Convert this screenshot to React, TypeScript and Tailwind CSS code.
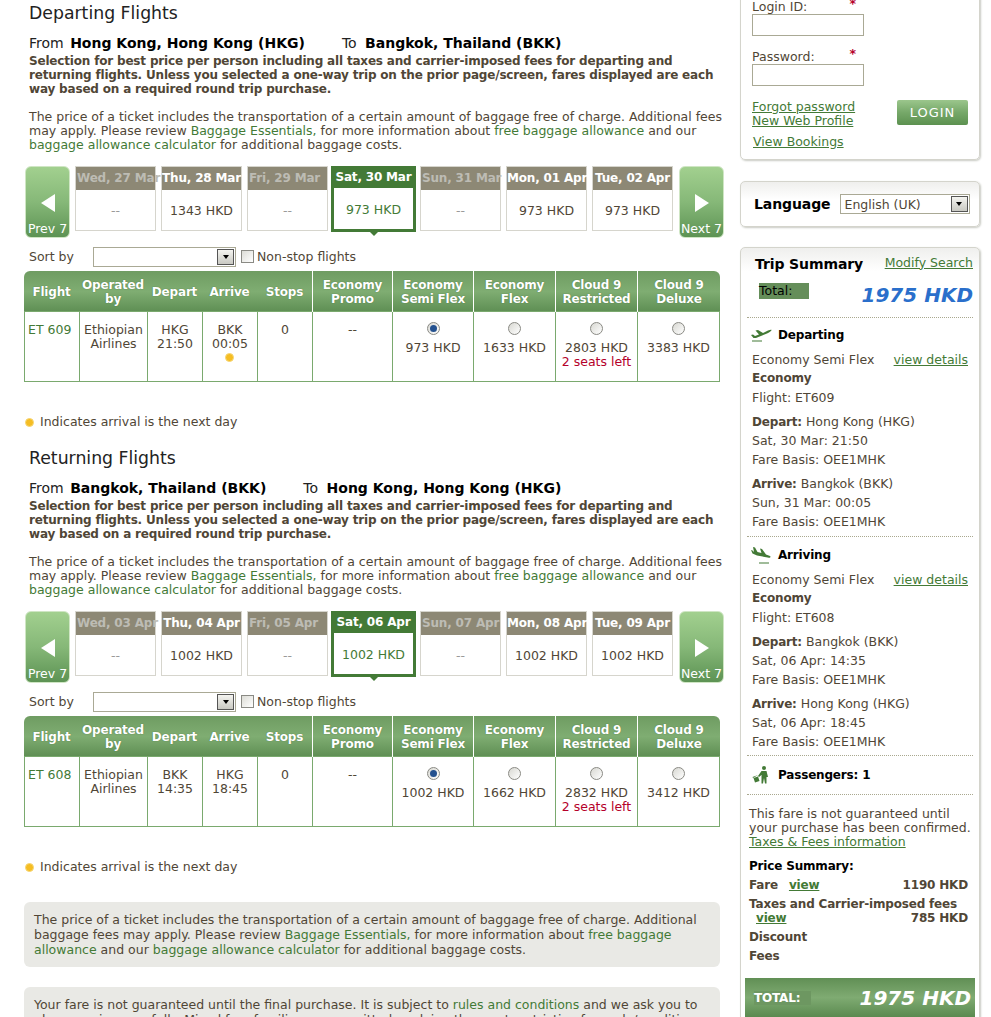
import React from 'react';

const link = 'text-[#437a36]';
const bold = 'font-bold text-[12px] tracking-[-0.18px]';

interface DayCell { label: string; price: string; off?: boolean; selected?: boolean }
interface FlightData {
  title: string;
  from: string;
  to: string;
  days: DayCell[];
  flight: string;
  depCode: string;
  depTime: string;
  arrCode: string;
  arrTime: string;
  nextDay: boolean;
  fares: string[];
}

const sections: FlightData[] = [
  {
    title: 'Departing Flights',
    from: 'Hong Kong, Hong Kong (HKG)',
    to: 'Bangkok, Thailand (BKK)',
    days: [
      { label: 'Wed, 27 Mar', price: '--', off: true },
      { label: 'Thu, 28 Mar', price: '1343 HKD' },
      { label: 'Fri, 29 Mar', price: '--', off: true },
      { label: 'Sat, 30 Mar', price: '973 HKD', selected: true },
      { label: 'Sun, 31 Mar', price: '--', off: true },
      { label: 'Mon, 01 Apr', price: '973 HKD' },
      { label: 'Tue, 02 Apr', price: '973 HKD' },
    ],
    flight: 'ET 609',
    depCode: 'HKG',
    depTime: '21:50',
    arrCode: 'BKK',
    arrTime: '00:05',
    nextDay: true,
    fares: ['973 HKD', '1633 HKD', '2803 HKD', '3383 HKD'],
  },
  {
    title: 'Returning Flights',
    from: 'Bangkok, Thailand (BKK)',
    to: 'Hong Kong, Hong Kong (HKG)',
    days: [
      { label: 'Wed, 03 Apr', price: '--', off: true },
      { label: 'Thu, 04 Apr', price: '1002 HKD' },
      { label: 'Fri, 05 Apr', price: '--', off: true },
      { label: 'Sat, 06 Apr', price: '1002 HKD', selected: true },
      { label: 'Sun, 07 Apr', price: '--', off: true },
      { label: 'Mon, 08 Apr', price: '1002 HKD' },
      { label: 'Tue, 09 Apr', price: '1002 HKD' },
    ],
    flight: 'ET 608',
    depCode: 'BKK',
    depTime: '14:35',
    arrCode: 'HKG',
    arrTime: '18:45',
    nextDay: false,
    fares: ['1002 HKD', '1662 HKD', '2832 HKD', '3412 HKD'],
  },
];

const Dot = () => (
  <span className="inline-block w-[9px] h-[9px] rounded-full bg-[#f5bd23] border border-[#f7d675]" />
);

const SelectArrow = () => (
  <span className="absolute right-[1px] top-[1px] bottom-[1px] w-[17px] flex items-center justify-center bg-gradient-to-b from-[#f4f4f0] to-[#c9c9c2] border border-[#555]">
    <span className="w-0 h-0 border-x-[3.5px] border-x-transparent border-t-[4px] border-t-black" />
  </span>
);

const PlaneUp = () => (
  <svg width="21" height="14" viewBox="0 0 21 14" className="text-[#437a36]">
    <path d="M0 7 L2 6.5 L4 8 L8 6.5 L4.5 2.5 L7 2 L12 5 L17 2.5 C19 1.6 20.5 1.4 20.6 2 C20.6 3 18 4.5 16 5.5 L5 10 L2.5 10 Z" fill="currentColor" />
    <rect x="1" y="12.5" width="10" height="1" fill="currentColor" />
  </svg>
);

const PlaneDown = () => (
  <svg width="20" height="17" viewBox="0 0 20 17" className="text-[#437a36]">
    <path d="M2 0 L4 .5 L6.5 5 L10.5 6 L9 1.5 L11 2 L15 7.5 L19 9 C20 9.6 19.5 11 18 10.8 L6 8.5 L1.5 6.5 L0 3 L1.5 3.5 L3 5 Z" fill="currentColor" />
    <rect x="8" y="15.5" width="10" height="1" fill="currentColor" />
  </svg>
);

const Traveller = () => (
  <svg width="17" height="18" viewBox="0 0 17 18" className="text-[#437a36]">
    <circle cx="12" cy="2" r="2" fill="currentColor" />
    <path d="M9.5 5 H14.5 L16 11 H14.5 L14.5 17.5 H13 L12 12 L11 17.5 H9.5 L9.5 9 L7 11 L6 10 Z" fill="currentColor" />
    <path d="M1.5 12 L6 10.5 L7.5 15 L3 16.5 Z M6 9 L1 12 L.5 11 Z" fill="currentColor" />
  </svg>
);

const NavButton = ({ dir }: { dir: 'prev' | 'next' }) => (
  <div className="relative w-[45px] h-[72px] rounded-[6px] border border-[#cfe6c4] bg-gradient-to-b from-[#a2d08f] via-[#86b878] to-[#5d9354] flex flex-col items-center shrink-0">
    <span
      className={
        dir === 'prev'
          ? 'mt-[27px] w-0 h-0 border-y-[9px] border-y-transparent border-r-[14px] border-r-white'
          : 'mt-[27px] w-0 h-0 border-y-[9px] border-y-transparent border-l-[14px] border-l-white'
      }
    />
    <span className="absolute bottom-[1px] left-0 right-0 text-center text-white text-[12.5px] leading-[14px] whitespace-nowrap">
      {dir === 'prev' ? 'Prev 7' : 'Next 7'}
    </span>
  </div>
);

const DayCard = ({ day }: { day: DayCell }) => {
  if (day.selected) {
    return (
      <div className="relative w-[85px] h-[66px] border-[3px] border-t-0 border-[#437a36] shrink-0 -ml-[2px] -mr-[1px] bg-white">
        <div className={`h-[22px] bg-[#437a36] text-white ${bold} leading-[22px] text-center whitespace-nowrap`}>
          {day.label}
        </div>
        <div className="text-center text-[#437a36] leading-[14px] mt-[15px]">{day.price}</div>
        <span className="absolute left-1/2 -translate-x-1/2 -bottom-[7px] w-0 h-0 border-x-[7px] border-x-transparent border-t-[7px] border-t-[#437a36]" />
      </div>
    );
  }
  return (
    <div className="w-[81px] h-[65px] border border-[#d6d5cd] shrink-0">
      <div
        className={
          day.off
            ? `h-[23px] bg-[#8d8875] text-[#bdbcb4] ${bold} leading-[23px] pl-[1px] whitespace-nowrap`
            : `h-[23px] bg-[#8d8875] text-white ${bold} leading-[23px] text-center whitespace-nowrap`
        }
      >
        {day.label}
      </div>
      <div className={day.off ? 'text-center text-[#9a9a9a] leading-[14px] mt-[14px]' : 'text-center leading-[14px] mt-[14px]'}>
        {day.price}
      </div>
    </div>
  );
};

const Radio = ({ checked }: { checked?: boolean }) => (
  <span className="inline-flex items-center justify-center w-[13px] h-[13px] rounded-full border border-[#8a8a84] bg-gradient-to-br from-[#d8d8d2] to-white">
    {checked && <span className="w-[7px] h-[7px] rounded-full bg-[#24518f]" />}
  </span>
);

const headCols = [
  { label: ['Flight'], w: 'w-[55px]' },
  { label: ['Operated', 'by'], w: 'w-[68px]' },
  { label: ['Depart'], w: 'w-[55px]' },
  { label: ['Arrive'], w: 'w-[55px]' },
  { label: ['Stops'], w: 'w-[55px]' },
  { label: ['Economy', 'Promo'], w: 'w-[80px]', line: true },
  { label: ['Economy', 'Semi Flex'], w: 'w-[81px]', line: true },
  { label: ['Economy', 'Flex'], w: 'w-[82px]', line: true },
  { label: ['Cloud 9', 'Restricted'], w: 'w-[82px]', line: true },
  { label: ['Cloud 9', 'Deluxe'], w: 'w-[83px]', line: true },
];

const FlightSection = ({ s }: { s: FlightData }) => (
  <section>
    <h2 className="pl-[5px] text-[17.3px] leading-[26px] text-[#222] h-[26px]">{s.title}</h2>
    <p className="pl-[5px] mt-[8px] text-[14px] leading-[18px] text-[#222] whitespace-nowrap">
      From <b className="text-black ml-[2px]">{s.from}</b>
      <span className="ml-[37px]">To </span>
      <b className="text-black ml-[4px]">{s.to}</b>
    </p>
    <p className={`pl-[5px] w-[700px] mt-[2px] ${bold} leading-[14px]`}>
      Selection for best price per person including all taxes and carrier-imposed fees for departing and returning flights. Unless you selected a one-way trip on the prior page/screen, fares displayed are each way based on a required round trip purchase.
    </p>
    <p className="pl-[5px] w-[704px] mt-[14px] leading-[14px]">
      The price of a ticket includes the transportation of a certain amount of baggage free of charge. Additional fees may apply. Please review <span className={link}>Baggage Essentials,</span> for more information about <span className={link}>free baggage allowance</span> and our <span className={link}>baggage allowance calculator</span> for additional baggage costs.
    </p>

    <div className="flex gap-[5px] mt-[14px] ml-[1px] h-[73px] w-[700px]">
      <NavButton dir="prev" />
      {s.days.map(d => <DayCard key={d.label} day={d} />)}
      <div className="ml-[1px]"><NavButton dir="next" /></div>
    </div>

    <div className="flex items-center h-[20px] mt-[8px] pl-[5px]">
      <span className="w-[64px]">Sort by</span>
      <span className="relative inline-block w-[143px] h-[20px] border border-[#aaa995] bg-white"><SelectArrow /></span>
      <span className="ml-[5px] w-[13px] h-[13px] border border-[#8a8a84] bg-gradient-to-br from-[#dcdcd6] to-white -mt-[2px]" />
      <span className="ml-[3px]">Non-stop flights</span>
    </div>

    <div className="mt-[4px] w-[696px]">
      <div className="flex h-[41px] rounded-t-[6px] overflow-hidden bg-gradient-to-b from-[#6f9c62] via-[#7fad72] to-[#5e8e53]">
        {headCols.map(c => (
          <div
            key={c.label.join(' ')}
            className={`${c.w} ${c.line ? 'border-l border-white' : ''} flex flex-col items-center justify-center text-white ${bold} leading-[14px] [text-shadow:0_0_1px_#3f6b36]`}
          >
            {c.label.map(l => <span key={l}>{l}</span>)}
          </div>
        ))}
      </div>
      <div className="flex h-[71px] border-x border-b border-[#7aa96e] border-t leading-[14px] text-center -mt-[1px]">
        <div className="w-[55px] pt-[11px] pl-[3px] text-left text-[#437a36] border-r border-[#7aa96e] shrink-0">{s.flight}</div>
        <div className="w-[68px] pt-[11px] border-r border-[#7aa96e] shrink-0">Ethiopian<br />Airlines</div>
        <div className="w-[55px] pt-[11px] border-r border-[#7aa96e] shrink-0">{s.depCode}<br />{s.depTime}</div>
        <div className="w-[55px] pt-[11px] border-r border-[#7aa96e] shrink-0">
          {s.arrCode}<br />{s.arrTime}
          {s.nextDay && <div className="flex justify-center -ml-[2px] mt-[2px]"><Dot /></div>}
        </div>
        <div className="w-[55px] pt-[11px] border-r border-[#7aa96e] shrink-0">0</div>
        <div className="w-[80px] pt-[11px] border-r border-[#7aa96e] shrink-0">--</div>
        {s.fares.map((f, i) => (
          <div key={f} className={i === 3 ? 'w-[81px] pt-[10px] shrink-0' : i === 0 ? 'w-[81px] pt-[10px] border-r border-[#7aa96e] shrink-0' : 'w-[82px] pt-[10px] border-r border-[#7aa96e] shrink-0'}>
            <div className="h-[15px] flex justify-center"><Radio checked={i === 0} /></div>
            <div className="mt-[4px]">{f}</div>
            {i === 2 && <div className="text-[#b5002a]">2 seats left</div>}
          </div>
        ))}
      </div>
    </div>

    <div className="flex items-center h-[14px] mt-[33px] ml-[1px] gap-[6px]">
      <Dot />
      <span>Indicates arrival is the next day</span>
    </div>
  </section>
);

const Row = ({ children, className = '' }: { children: React.ReactNode; className?: string }) => (
  <div className={`h-[19px] leading-[19px] whitespace-nowrap ${className}`}>{children}</div>
);

const Leg = ({
  heading, icon, flight, depart, depTime, arrive, arrTime, top, bottom,
}: {
  heading: string; icon: React.ReactNode; flight: string; depart: string; depTime: string; arrive: string; arrTime: string; top: string; bottom: string;
}) => (
  <div className={`border-b border-dotted border-[#a9a88f] mx-[6px] ${bottom}`}>
    <div className={`flex items-center h-[18px] ${top} mb-[6px]`}>
      <span className="w-[31px] pl-[4px] flex items-center">{icon}</span>
      <b className={`text-black ${bold}`}>{heading}</b>
    </div>
    <div className="pl-[5px] pr-[5px]">
      <Row className="flex justify-between">
        <span>Economy Semi Flex</span>
        <span className={`${link} underline`}>view details</span>
      </Row>
      <Row className={bold}>Economy</Row>
      <Row>Flight: {flight}</Row>
      <Row className="mt-[5px]"><b className={bold}>Depart:</b> {depart}</Row>
      <Row>{depTime}</Row>
      <Row>Fare Basis: OEE1MHK</Row>
      <Row className="mt-[5px]"><b className={bold}>Arrive:</b> {arrive}</Row>
      <Row>{arrTime}</Row>
      <Row>Fare Basis: OEE1MHK</Row>
    </div>
  </div>
);

const Panel = ({ children, className = '' }: { children: React.ReactNode; className?: string }) => (
  <div className={`border border-[#d4d4cc] rounded-[5px] shadow-[1px_1px_2px_#c9cbc4] ${className}`}>{children}</div>
);

export default function App() {
  return (
    <div className="h-[1017px] w-[991px] overflow-hidden bg-white flex font-['DejaVu_Sans',Verdana,sans-serif] text-[12.5px] text-[#504636]">
      <main className="w-[740px] pl-[24px] shrink-0">
        <FlightSection s={sections[0]} />
        <div className="h-[16px]" />
        <FlightSection s={sections[1]} />
        <div className="mt-[28px] w-[696px] h-[65px] rounded-[6px] bg-[#e9e9e5] px-[10px] py-[10px] leading-[15px]">
          The price of a ticket includes the transportation of a certain amount of baggage free of charge. Additional baggage fees may apply. Please review <span className={link}>Baggage Essentials,</span> for more information about <span className={link}>free baggage allowance</span> and our <span className={link}>baggage allowance calculator</span> for additional baggage costs.
        </div>
        <div className="mt-[20px] w-[696px] h-[65px] rounded-[6px] bg-[#e9e9e5] px-[10px] py-[10px] leading-[15px]">
          Your fare is not guaranteed until the final purchase. It is subject to <span className={link}>rules and conditions</span> and we ask you to please review carefully. Mixed fare families are permitted applying the most restrictive fare rule/conditions.
        </div>
      </main>

      <aside className="w-[240px] shrink-0">
        <Panel className="h-[170px] -mt-[10px] px-[11px] pt-[9px] relative rounded-t-none">
          <div className="flex w-[112px] justify-between leading-[14px]">
            <span>Login ID:</span>
            <span className="text-[#b5002a] font-bold mr-[8px] -mt-[3px]">*</span>
          </div>
          <div className="w-[112px] h-[22px] border border-[#aaa995] bg-white" />
          <div className="flex w-[112px] justify-between leading-[14px] mt-[14px]">
            <span>Password:</span>
            <span className="text-[#b5002a] font-bold mr-[8px] -mt-[3px]">*</span>
          </div>
          <div className="w-[112px] h-[22px] border border-[#aaa995] bg-white" />
          <div className="flex justify-between mt-[14px]">
            <div className="leading-[14px]">
              <div className={`${link} underline`}>Forgot password</div>
              <div className={`${link} underline`}>New Web Profile</div>
              <div className={`${link} underline mt-[7px] ml-[1px]`}>View Bookings</div>
            </div>
            <div className="w-[71px] h-[25px] rounded-[2px] bg-gradient-to-b from-[#9bc68c] via-[#76a869] to-[#5c9150] text-white text-[13px] tracking-[1px] flex items-center justify-center">LOGIN</div>
          </div>
        </Panel>

        <Panel className="h-[46px] mt-[21px] bg-gradient-to-b from-[#efefed] to-white to-40% flex items-center pl-[13px]">
          <b className="text-[14px] tracking-[-0.1px] text-black">Language</b>
          <span className="relative ml-[9px] w-[130px] h-[20px] border border-[#aaa995] bg-white pl-[4px] leading-[20px]">
            English (UK)
            <SelectArrow />
          </span>
        </Panel>

        <Panel className="mt-[20px] h-[790px] rounded-b-none bg-gradient-to-b from-[#efefed] to-white to-[3%]">
          <div className="flex justify-between items-center pl-[14px] pr-[6px] mt-[6px] h-[20px]">
            <b className="text-[14px] tracking-[-0.1px] text-black">Trip Summary</b>
            <span className={`${link} underline -mt-[2px]`}>Modify Search</span>
          </div>
          <div className="flex justify-between pl-[18px] pr-[6px] mt-[9px] h-[34px]">
            <span className="w-[50px] h-[16px] bg-[#658e5a] text-black leading-[16px]">Total:</span>
            <b className="italic text-[20px] leading-[22px] mt-[1px] text-[#2a6fcb]">1975 HKD</b>
          </div>
          <div className="border-b border-dotted border-[#a9a88f] mx-[6px]" />
          <Leg top="mt-[8px]" bottom="pb-[5px]" heading="Departing" icon={<PlaneUp />} flight="ET609" depart="Hong Kong (HKG)" depTime="Sat, 30 Mar: 21:50" arrive="Bangkok (BKK)" arrTime="Sun, 31 Mar: 00:05" />
          <Leg top="mt-[9px]" bottom="pb-[4px]" heading="Arriving" icon={<PlaneDown />} flight="ET608" depart="Bangkok (BKK)" depTime="Sat, 06 Apr: 14:35" arrive="Hong Kong (HKG)" arrTime="Sat, 06 Apr: 18:45" />
          <div className="border-b border-dotted border-[#a9a88f] mx-[6px] h-[39px] flex items-center">
            <span className="w-[31px] pl-[5px] flex items-center"><Traveller /></span>
            <b className={`text-black ${bold}`}>Passengers: 1</b>
          </div>
          <div className="px-[8px] mt-[12px] leading-[14px]">
            <p>This fare is not guaranteed until your purchase has been confirmed.</p>
            <p className={`${link} underline`}>Taxes &amp; Fees information</p>
          </div>
          <div className={`pl-[8px] pr-[11px] mt-[8px] ${bold}`}>
            <Row className="text-black">Price Summary:</Row>
            <Row className="flex justify-between">
              <span>Fare <span className={`${link} underline ml-[7px]`}>view</span></span>
              <span>1190 HKD</span>
            </Row>
            <div className="leading-[14px] mt-[2px] whitespace-nowrap">Taxes and Carrier-imposed fees</div>
            <div className="flex justify-between leading-[14px]">
              <span className={`${link} underline ml-[7px]`}>view</span>
              <span>785 HKD</span>
            </div>
            <Row className="mt-[3px]">Discount</Row>
            <Row>Fees</Row>
          </div>
          <div className="mx-[4px] mt-[12px] w-[230px] h-[39px] bg-gradient-to-b from-[#618f55] via-[#7fab72] to-[#5b8a50] flex items-center justify-between pl-[9px] pr-[4px]">
            <span className={`w-[57px] h-[14px] bg-[#6d9761] text-white ${bold} leading-[14px]`}>TOTAL:</span>
            <b className="italic text-[20px] text-white">1975 HKD</b>
          </div>
        </Panel>
      </aside>
    </div>
  );
}
